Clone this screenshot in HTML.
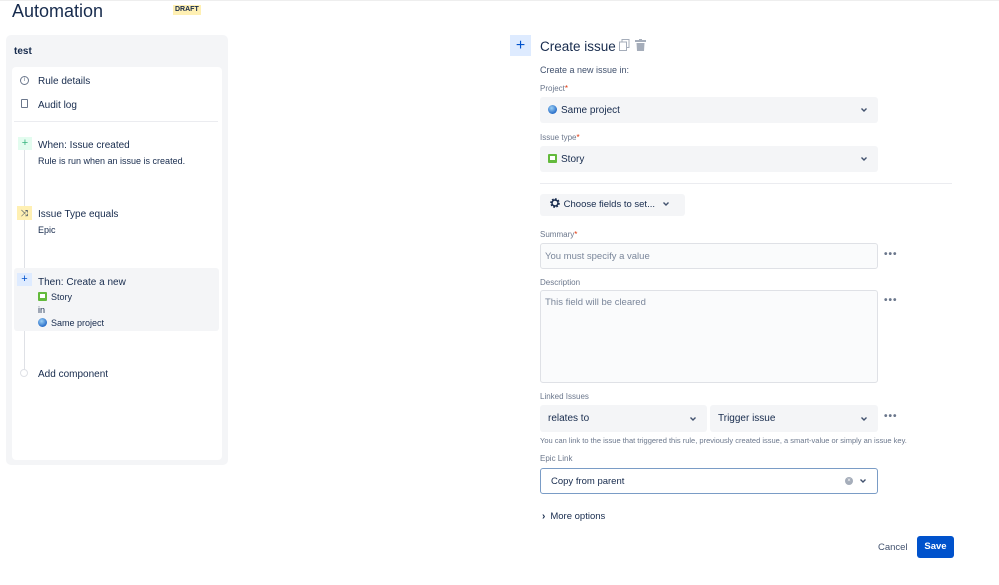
<!DOCTYPE html>
<html><head><meta charset="utf-8"><style>
*{box-sizing:border-box;margin:0;padding:0}
body{width:999px;height:585px;background:#fff;font-family:"Liberation Sans",sans-serif;color:#172b4d;position:relative;overflow:hidden}
.a{position:absolute;white-space:nowrap}
.f{font-size:10px}
.lbl{font-size:8px;color:#6b778c}
.lbl b{color:#de350b;font-weight:normal}
.sel{position:absolute;background:#f4f5f7;border-radius:3px;height:26px;font-size:10px;line-height:27px;padding-left:8px}
.chev{position:absolute;right:10px;top:50%;margin-top:-3px;width:8px;height:6px}
.dots{position:absolute;font-size:10px;color:#6b778c;letter-spacing:1px;font-weight:bold}
.story{display:inline-block;width:9px;height:9px;background:#63ba3c;border-radius:1px;vertical-align:-1px;margin-right:4px;position:relative}
.story:after{content:"";position:absolute;left:2px;top:2px;width:5px;height:4px;background:#fff}
.globe{display:inline-block;width:9px;height:9px;border-radius:50%;background:radial-gradient(circle at 40% 35%,#9cd0f5,#2a6fc9 70%);vertical-align:-1px;margin-right:4px}
</style></head><body>
<svg width="0" height="0" style="position:absolute"><defs><symbol id="cv" viewBox="0 0 8 6"><path d="M1.5 1.5 L4 4 L6.5 1.5" fill="none" stroke="#42526e" stroke-width="1.4"/></symbol></defs></svg>
<div style="position:absolute;left:0;top:0;width:999px;height:1px;background:#eee"></div>
<div class="a" style="left:12px;top:0px;font-size:18px;line-height:22px">Automation</div>
<div class="a" style="left:173px;top:5px;height:10px;padding:0 2px;background:#fff0b3;font-size:7px;font-weight:bold;line-height:10px;color:#172b4d">DRAFT</div>

<div class="a" style="left:6px;top:35px;width:222px;height:430px;background:#f4f5f7;border-radius:5px"></div>
<div class="a" style="left:14px;top:46px;font-size:10px;font-weight:bold">test</div>
<div class="a" style="left:12px;top:67px;width:210px;height:393px;background:#fff;border-radius:4px"></div>
<div class="a" style="left:20px;top:76px;width:9px;height:9px;border:1px solid #6b778c;border-radius:50%;font-size:6px;line-height:7px;text-align:center;color:#6b778c">i</div>
<div class="a f" style="left:38px;top:76px">Rule details</div>
<div class="a" style="left:21px;top:99px;width:7px;height:9px;border:1px solid #6b778c;border-radius:1px"></div>
<div class="a f" style="left:38px;top:100px">Audit log</div>
<div class="a" style="left:14px;top:121px;width:204px;height:1px;background:#ebecf0"></div>
<div class="a" style="left:24px;top:145px;width:1px;height:226px;background:#dfe1e6"></div>
<div class="a" style="left:18px;top:137px;width:14px;height:13px;background:#e3fcef;color:#36b37e;font-size:11px;line-height:12px;text-align:center">+</div>
<div class="a f" style="left:38px;top:140px">When: Issue created</div>
<div class="a" style="left:38px;top:156px;font-size:9px">Rule is run when an issue is created.</div>
<div class="a" style="left:17px;top:206px;width:15px;height:14px;background:#fff0b3;color:#172b4d;font-size:9px;line-height:14px;text-align:center">⤨</div>
<div class="a f" style="left:38px;top:209px">Issue Type equals</div>
<div class="a" style="left:38px;top:225px;font-size:9px">Epic</div>
<div class="a" style="left:14px;top:268px;width:205px;height:63px;background:#f4f5f7;border-radius:3px"></div>
<div class="a" style="left:17px;top:273px;width:15px;height:13px;background:#deebff;color:#0052cc;font-size:11px;line-height:12px;text-align:center">+</div>
<div class="a f" style="left:38px;top:277px">Then: Create a new</div>
<div class="a" style="left:38px;top:292px;font-size:9px"><span class="story"></span>Story</div>
<div class="a" style="left:38px;top:305px;font-size:9px">in</div>
<div class="a" style="left:38px;top:318px;font-size:9px"><span class="globe"></span>Same project</div>
<div class="a" style="left:20px;top:369px;width:8px;height:8px;border:1px solid #dfe1e6;border-radius:50%;background:#fff"></div>
<div class="a f" style="left:38px;top:369px">Add component</div>

<div class="a" style="left:510px;top:35px;width:21px;height:21px;background:#deebff;color:#0052cc;font-size:16px;line-height:21px;text-align:center">+</div>
<div class="a" style="left:540px;top:38px;font-size:13.5px;line-height:17px">Create issue</div>
<svg class="a" style="left:619px;top:39px" width="11" height="12" viewBox="0 0 11 12"><rect x="3" y="0.5" width="7" height="8" fill="none" stroke="#a5adba"/><rect x="0.5" y="3" width="7" height="8.5" fill="#fff" stroke="#a5adba"/></svg>
<svg class="a" style="left:635px;top:39px" width="11" height="12" viewBox="0 0 11 12"><rect x="0" y="1" width="11" height="2" fill="#a5adba"/><rect x="4" y="0" width="3" height="2" fill="#a5adba"/><path d="M1.5 4 H9.5 L9 12 H2 Z" fill="#a5adba"/></svg>
<div class="a" style="left:540px;top:65px;font-size:9px;color:#42526e">Create a new issue in:</div>
<div class="a lbl" style="left:540px;top:84px">Project<b>*</b></div>
<div class="sel" style="left:540px;top:97px;width:338px"><span class="globe"></span>Same project<svg class="chev"><use href="#cv"/></svg></div>
<div class="a lbl" style="left:540px;top:133px">Issue type<b>*</b></div>
<div class="sel" style="left:540px;top:146px;width:338px"><span class="story"></span>Story<svg class="chev"><use href="#cv"/></svg></div>
<div class="a" style="left:540px;top:183px;width:412px;height:1px;background:#ebecf0"></div>
<div class="sel" style="left:540px;top:194px;width:145px;height:22px;line-height:22px;font-size:9.5px;padding-left:9px"><svg style="vertical-align:-2px" width="12" height="12" viewBox="0 0 12 12"><circle cx="6" cy="6" r="3.6" fill="none" stroke="#172b4d" stroke-width="2.4" stroke-dasharray="1.6 1.2"/><circle cx="6" cy="6" r="3" fill="none" stroke="#172b4d" stroke-width="1.4"/></svg> Choose fields to set... <svg style="vertical-align:0;margin-left:4px" width="8" height="6"><use href="#cv"/></svg></div>
<div class="a lbl" style="left:540px;top:230px">Summary<b>*</b></div>
<div class="a" style="left:540px;top:243px;width:338px;height:26px;background:#fafbfc;border:1px solid #dfe1e6;border-radius:3px;font-size:9.5px;line-height:26px;padding-left:4px;color:#7a869a">You must specify a value</div>
<div class="dots" style="left:884px;top:249px">•••</div>
<div class="a lbl" style="left:540px;top:278px">Description</div>
<div class="a" style="left:540px;top:290px;width:338px;height:93px;background:#fafbfc;border:1px solid #dfe1e6;border-radius:3px;font-size:9.5px;padding:6px 4px;color:#7a869a">This field will be cleared</div>
<div class="dots" style="left:884px;top:295px">•••</div>
<div class="a lbl" style="left:540px;top:392px">Linked Issues</div>
<div class="sel" style="left:540px;top:405px;width:167px;height:27px;line-height:28px">relates to<svg class="chev"><use href="#cv"/></svg></div>
<div class="sel" style="left:710px;top:405px;width:168px;height:27px;line-height:28px">Trigger issue<svg class="chev"><use href="#cv"/></svg></div>
<div class="dots" style="left:884px;top:411px">•••</div>
<div class="a" style="left:540px;top:436px;font-size:7.5px;color:#6b778c">You can link to the issue that triggered this rule, previously created issue, a smart-value or simply an issue key.</div>
<div class="a lbl" style="left:540px;top:454px">Epic Link</div>
<div class="a" style="left:540px;top:468px;width:338px;height:26px;background:#fff;border:1px solid #7a9cc6;border-radius:3px;font-size:9.5px;line-height:25px;padding-left:10px">Copy from parent<span style="position:absolute;right:24px;top:8px;width:8px;height:8px;border-radius:50%;background:#a5adba;color:#fff;font-size:6px;line-height:8px;text-align:center">×</span><svg class="chev"><use href="#cv"/></svg></div>
<div class="a" style="left:542px;top:511px;font-size:9.5px"><span style="font-size:10px;margin-right:5px;font-weight:bold">›</span>More options</div>
<div class="a" style="left:878px;top:542px;font-size:9.5px;color:#42526e">Cancel</div>
<div class="a" style="left:917px;top:536px;width:37px;height:22px;background:#0052cc;border-radius:3px;color:#fff;font-size:9.5px;font-weight:bold;line-height:22px;text-align:center">Save</div>
</body></html>
